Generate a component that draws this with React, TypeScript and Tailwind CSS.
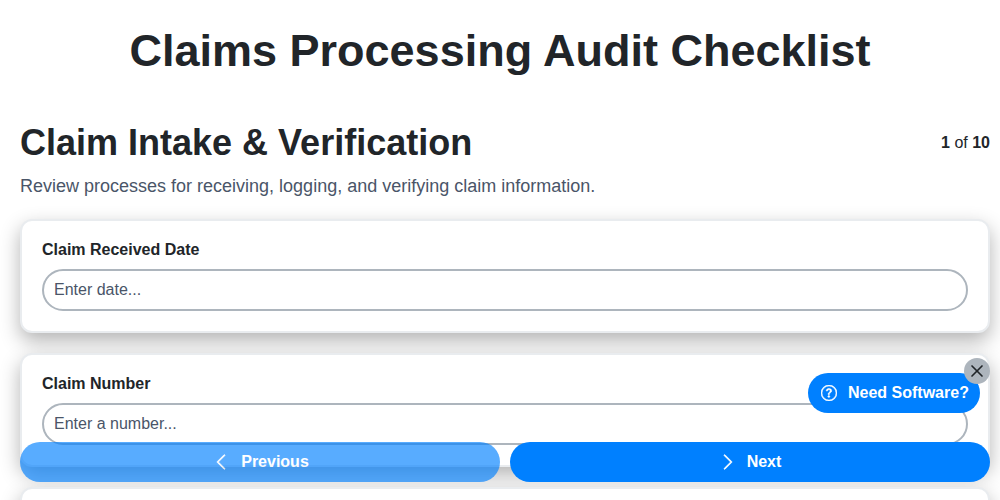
import { BsChevronLeft, BsChevronRight, BsQuestionCircle } from 'react-icons/bs'
import { X } from 'lucide-react'

const fields = [
  { label: 'Claim Received Date', placeholder: 'Enter date...' },
  { label: 'Claim Number', placeholder: 'Enter a number...' },
]

const cardClass =
  'mb-5 rounded-xl border-2 border-[#e9ecef] bg-white px-5 pt-[18px] pb-5 shadow-[0_8px_20px_rgba(0,0,0,0.3)]'

function FieldCard({ label, placeholder }: { label: string; placeholder: string }) {
  return (
    <div className={cardClass}>
      <label className="mb-2 block text-base leading-[22px] font-bold text-[#212529]">{label}</label>
      <input
        type="text"
        placeholder={placeholder}
        className="block h-[42px] w-full rounded-[21px] border-2 border-[#adb5bd] bg-white px-2.5 text-base text-[#212529] outline-none placeholder:text-[#4a5568]"
      />
    </div>
  )
}

export default function App() {
  return (
    <div className="relative h-[500px] w-[1000px] overflow-hidden bg-white font-['Liberation_Sans',sans-serif] text-[#212529]">
      <h1 className="pt-6 text-center text-[45px] leading-[54px] font-bold">Claims Processing Audit Checklist</h1>

      <div className="pt-[43px] pr-2.5 pl-5">
        <div className="flex items-start justify-between">
          <h2 className="text-[36px] leading-[44px] font-bold">Claim Intake &amp; Verification</h2>
          <div className="pt-[12px] text-base leading-[20px]">
            <b>1</b> of <b>10</b>
          </div>
        </div>
        <p className="mt-[10px] mb-[22px] text-lg leading-[22px] text-[#4a5568]">
          Review processes for receiving, logging, and verifying claim information.
        </p>
        {fields.map((f) => (
          <FieldCard key={f.label} label={f.label} placeholder={f.placeholder} />
        ))}
        <div className={`${cardClass} h-[114px]`} />
      </div>

      {/* Bottom navigation */}
      <div className="absolute right-2.5 bottom-[18px] left-5 grid grid-cols-2 gap-2.5">
        <button className="flex h-10 items-center justify-center gap-[11px] rounded-[20px] bg-[#0080ff] pl-px text-base font-bold text-white opacity-65">
          <BsChevronLeft size={18} stroke="currentColor" strokeWidth={0.6} />
          Previous
        </button>
        <button className="flex h-10 items-center justify-center gap-[10px] rounded-[20px] bg-[#0080ff] text-base font-bold text-white">
          <BsChevronRight size={18} stroke="currentColor" strokeWidth={0.6} />
          Next
        </button>
      </div>

      {/* Floating promo */}
      <div className="absolute top-[373px] left-[808px] flex h-10 w-[172px] items-center gap-[11px] rounded-[20px] bg-[#0080ff] pl-[13px] text-base font-bold text-white">
        <BsQuestionCircle size={16} stroke="currentColor" strokeWidth={0.5} />
        Need Software?
      </div>
      <div className="absolute top-[358px] left-[964px] flex h-[26px] w-[26px] items-center justify-center rounded-full bg-[#adb5bd] text-[#212529]">
        <X size={20} strokeWidth={2} />
      </div>
    </div>
  )
}
